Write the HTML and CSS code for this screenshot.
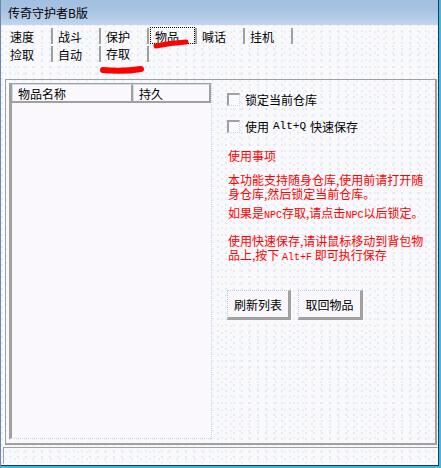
FILE: index.html
```html
<!DOCTYPE html>
<html lang="zh-CN">
<head>
    <meta charset="UTF-8">
    <title>传奇守护者B版</title>
    <link rel="stylesheet" href="styles.css">
</head>
<body>
    <div class="window">
        <div class="frame">
            <div class="titlebar">传奇守护者B版</div>

            <div class="client">
                <!-- Tab-Leiste, zwei Reihen -->
                <div class="tabs">
                    <div class="tab-row">
                        <span class="tab">速度</span>
                        <span class="tab">战斗</span>
                        <span class="tab">保护</span>
                        <span class="tab active"><span class="label">物品</span></span>
                        <span class="tab">喊话</span>
                        <span class="tab">挂机</span>
                    </div>
                    <div class="tab-row">
                        <span class="tab">捡取</span>
                        <span class="tab">自动</span>
                        <span class="tab current">存取</span>
                    </div>
                </div>

                <div class="panel">
                    <div class="list">
                        <div class="list-head">
                            <span class="col col-name">物品名称</span>
                            <span class="col col-dur">持久</span>
                        </div>
                    </div>

                    <div class="side">
                        <label class="check"><span class="box"></span>锁定当前仓库</label>
                        <label class="check second"><span class="box"></span>使用 <span class="en">Alt+Q</span> 快速保存</label>

                        <p class="note note-title">使用事项</p>
                        <p class="note p1">本功能支持随身仓库,使用前请打开随<br>身仓库,然后锁定当前仓库。</p>
                        <p class="note p2">如果是<span class="en">NPC</span>存取,请点击<span class="en">NPC</span>以后锁定。</p>
                        <p class="note p3">使用快速保存,请讲鼠标移动到背包物<br>品上,按下 <span class="en">Alt+F</span> 即可执行保存</p>

                        <div class="buttons">
                            <button class="btn">刷新列表</button>
                            <button class="btn wide">取回物品</button>
                        </div>
                    </div>
                </div>

                <div class="status"></div>
            </div>
        </div>

        <!-- rote Markierungen -->
        <svg class="marks" width="441" height="468" viewBox="0 0 441 468">
            <path d="M156 46 Q170 43 186 42" stroke="#ff0000" stroke-width="5" stroke-linecap="round" fill="none"/>
            <path d="M103 70 Q122 72 141 69" stroke="#ff0000" stroke-width="6" stroke-linecap="round" fill="none"/>
        </svg>
    </div>
</body>
</html>
```

FILE: styles.css
```css
body {
    margin: 0;
    font-family: "Noto Sans CJK SC", "Noto Sans", sans-serif;
    font-size: 12px;
    color: #000;
    background: #fff;
}

.window {
    position: relative;
    width: 441px;
    height: 468px;
    box-sizing: border-box;
    border-left: 1px solid #6a88a8;
    border-right: 2px solid #3cbce4;
    border-bottom: 2px solid #3cbce4;
}

.frame {
    height: 100%;
    box-sizing: border-box;
    border-right: 1px solid #26394c;
    border-bottom: 1px solid #26394c;
    padding-bottom: 1px;
    display: flex;
    flex-direction: column;
    background-color: #f9f8fb;
    background-image:
        radial-gradient(circle at 1px 1px, #d6e2f3 0.6px, transparent 0.9px),
        radial-gradient(circle at 1px 1px, #dfe8f5 0.6px, transparent 0.9px);
    background-size: 8px 6px, 9px 7px;
    background-position: 0 0, 4px 3px;
}

.titlebar {
    height: 25px;
    line-height: 25px;
    padding-left: 7px;
    background: linear-gradient(#a2bfe0, #a7c3e2 40%, #b4cbe7 70%, #c2d6ed);
}

.client {
    flex: 1;
    display: flex;
    flex-direction: column;
    padding: 0 1px 0 4px;
}

/* Tabs */
.tabs {
    margin-top: 2px;
}

.tab-row {
    display: flex;
    height: 18px;
}

.tab {
    display: block;
    width: 48px;
    height: 16px;
    margin: 1px 0;
    box-sizing: border-box;
    padding-left: 5px;
    line-height: 18px;
    border-right: 2px solid #a0a0a0;
}

.tab.active {
    padding-left: 0;
}

.tab.active .label {
    display: block;
    height: 17px;
    margin: -1px 0 0 1px;
    padding-left: 4px;
    box-sizing: border-box;
    line-height: 17px;
    border: 1px dotted #000;
}

.tab.current {
    line-height: 15px;
}

/* Panel */
.panel {
    margin-top: 16px;
    height: 366px;
    box-sizing: border-box;
    border: 1px solid #a0a0a0;
    border-right-width: 2px;
    border-bottom-width: 2px;
    display: flex;
    padding: 3px 0 4px 3px;
}

.list {
    width: 202px;
    height: 356px;
    flex: none;
    box-sizing: border-box;
    background: #faf8fc;
    border-left: 3px solid #a0a0a0;
    border-top: 1px solid #a0a0a0;
    border-bottom: 1px dotted #c4d6ee;
}

.list-head {
    display: flex;
    height: 17px;
    border-bottom: 2px solid #a0a0a0;
}

.col {
    display: block;
    box-sizing: border-box;
    padding-left: 5px;
    line-height: 17px;
    border-left: 1px solid #cfdcee;
    border-top: 1px solid #cfdcee;
    border-right: 2px solid #a0a0a0;
}

.col-name {
    width: 121px;
}

.col-dur {
    width: 78px;
}

.side {
    flex: 1;
    padding: 10px 0 0 16px;
    border-left: 1px dotted #c4d6ee;
}

.check {
    display: flex;
    align-items: center;
    height: 13px;
    line-height: 13px;
    white-space: nowrap;
}

.check.second {
    margin-top: 14px;
}

.check .en {
    margin: 0 4px;
}

.en {
    font-family: "Liberation Mono", monospace;
    font-size: 11px;
}

.note .en {
    font-size: 10px;
}

.box {
    width: 13px;
    height: 13px;
    margin: 0 5px 0 -1px;
    box-sizing: border-box;
    background: #fafafe;
    border-left: 2px solid #a0a0a0;
    border-top: 2px solid #a0a0a0;
    border-right: 1px dotted #c4d6ee;
    border-bottom: 1px dotted #c4d6ee;
}

.note {
    margin: 0;
    color: #ff0000;
    line-height: 14px;
    white-space: nowrap;
}

.note-title {
    margin-top: 16px;
}

.p1 {
    margin-top: 10px;
}

.p2 {
    margin-top: 5px;
}

.p3 {
    margin-top: 11px;
}

.buttons {
    display: flex;
    gap: 7px;
    margin-top: 25px;
    margin-left: -1px;
}

.btn {
    width: 64px;
    height: 30px;
    padding: 0;
    box-sizing: border-box;
    font-family: inherit;
    font-size: 12px;
    color: #000;
    background: #f9f7fb;
    border: none;
    border-left: 1px dotted #b8cce8;
    border-top: 1px dotted #b8cce8;
    border-right: 3px solid #a0a0a0;
    border-bottom: 3px solid #a0a0a0;
}

.btn.wide {
    width: 65px;
}

.status {
    margin: 2px -1px 0 -2px;
    height: 17px;
    box-sizing: border-box;
    border-top: 1px solid #a0a0a0;
    border-left: 1px solid #a0a0a0;
    border-right: 1px solid #ffffff;
    border-bottom: 1px solid #ffffff;
}

.marks {
    position: absolute;
    top: 0;
    left: -1px;
    pointer-events: none;
}
```
